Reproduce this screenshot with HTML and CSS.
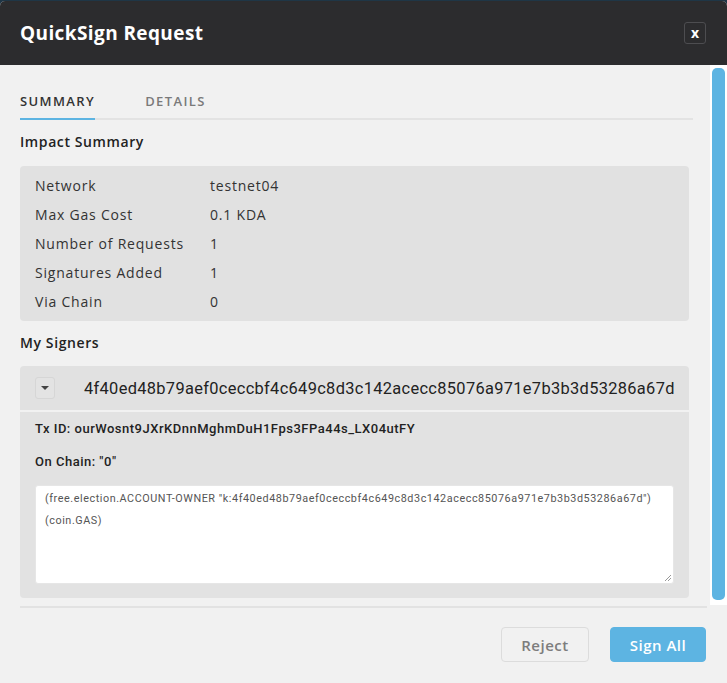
FILE: index.html
```html
<!DOCTYPE html>
<html>
<head>
<meta charset="utf-8">
<link rel="stylesheet" href="styles.css">
</head>
<body>
<div class="modal">
  <div class="header">
    <div class="title">QuickSign Request</div>
    <button class="close">x</button>
  </div>
  <div class="main">
    <div class="content">
      <div class="tabs">
        <div class="tab active">SUMMARY</div>
        <div class="tab">DETAILS</div>
      </div>
      <div class="heading first">Impact Summary</div>
      <div class="summary">
        <div class="row"><span class="label">Network</span><span class="value">testnet04</span></div>
        <div class="row"><span class="label">Max Gas Cost</span><span class="value">0.1 KDA</span></div>
        <div class="row"><span class="label">Number of Requests</span><span class="value">1</span></div>
        <div class="row"><span class="label">Signatures Added</span><span class="value">1</span></div>
        <div class="row"><span class="label">Via Chain</span><span class="value">0</span></div>
      </div>
      <div class="heading">My Signers</div>
      <div class="signer-head">
        <button class="toggle"><span class="caret"></span></button>
        <span class="key">4f40ed48b79aef0ceccbf4c649c8d3c142acecc85076a971e7b3b3d53286a67d</span>
      </div>
      <div class="signer-body">
        <div class="meta">Tx ID: ourWosnt9JXrKDnnMghmDuH1Fps3FPa44s_LX04utFY</div>
        <div class="meta chain">On Chain: "0"</div>
        <div class="caps">
          <div class="cap">(free.election.ACCOUNT-OWNER "k:4f40ed48b79aef0ceccbf4c649c8d3c142acecc85076a971e7b3b3d53286a67d")</div>
          <div class="cap">(coin.GAS)</div>
          <svg class="grip" width="8" height="8" viewBox="0 0 8 8"><path d="M7 1 L1 7 M7 4 L4 7" stroke="#999" stroke-width="1"/></svg>
        </div>
      </div>
    </div>
    <div class="scrollbar"><div class="thumb"></div></div>
  </div>
  <div class="footer">
    <div class="actions">
      <button class="btn reject">Reject</button>
      <button class="btn sign">Sign All</button>
    </div>
  </div>
</div>
</body>
</html>
```

FILE: styles.css
```css
* { box-sizing: border-box; }
html, body { margin: 0; padding: 0; }
body {
  background: #1f3646;
  width: 727px;
  height: 683px;
  overflow: hidden;
  font-family: "Open Sans", "Noto Sans", sans-serif;
}
.modal {
  margin-top: 1px;
  height: 682px;
  background: #f1f1f1;
  border-radius: 5px 5px 0 0;
  display: flex;
  flex-direction: column;
  overflow: hidden;
}
.header {
  height: 64px;
  flex: none;
  background: #2c2c2e;
  display: flex;
  align-items: center;
  justify-content: space-between;
  padding: 0 21px 0 20px;
}
.title {
  color: #fff;
  font-size: 19px;
  font-weight: 700;
  letter-spacing: 0.4px;
}
.close {
  width: 22px;
  height: 22px;
  padding: 0;
  border: 1px solid #4d4d50;
  border-radius: 3px;
  background: #2c2c2e;
  color: #fff;
  font-family: "Open Sans", sans-serif;
  font-weight: 700;
  font-size: 14px;
  line-height: 18px;
}
.main {
  height: 541px;
  flex: none;
  display: flex;
  overflow: hidden;
}
.content {
  flex: 1;
  min-width: 0;
  padding: 20px 21px 0 20px;
}
.tabs {
  display: flex;
  gap: 50px;
  border-bottom: 2px solid #e3e3e3;
  margin-right: -4px;
}
.tab {
  font-size: 13px;
  font-weight: 600;
  letter-spacing: 1.4px;
  color: #7a7a7a;
  line-height: 17px;
  padding: 8px 0 8px;
  margin-bottom: -2px;
  border-bottom: 2px solid transparent;
}
.tab.active {
  color: #333;
  border-bottom-color: #5db4e2;
}
.heading {
  font-size: 14px;
  font-weight: 600;
  color: #222;
  line-height: 20px;
  letter-spacing: 0.6px;
  margin: 12px 0 13px;
}
.heading.first { margin-top: 12px; margin-bottom: 14px; }
.summary {
  background: #e1e1e1;
  border-radius: 4px;
  padding: 5px 15px;
}
.row {
  display: flex;
  height: 29px;
  align-items: center;
  font-size: 14px;
  font-weight: 500;
  color: #333;
  letter-spacing: 0.8px;
}
.label { width: 175px; }
.signer-head {
  height: 44px;
  background: #e1e1e1;
  border-radius: 4px 4px 0 0;
  display: flex;
  align-items: center;
  padding-left: 15px;
}
.toggle {
  width: 20px;
  height: 22px;
  padding: 0;
  border: 1px solid #d6d6d6;
  border-radius: 3px;
  background: #e3e3e3;
  display: flex;
  align-items: center;
  justify-content: center;
}
.caret {
  width: 0;
  height: 0;
  border-left: 4px solid transparent;
  border-right: 4px solid transparent;
  border-top: 4px solid #444;
}
.key {
  margin-left: 29px;
  font-family: Roboto, "Liberation Sans", sans-serif;
  font-size: 16.4px;
  letter-spacing: 0.33px;
  color: #222;
  white-space: nowrap;
}
.signer-body {
  margin-top: 2px;
  background: #e2e2e2;
  border-radius: 0 0 4px 4px;
  padding: 8px 15px 14px;
}
.meta {
  font-family: Roboto, "Liberation Sans", sans-serif;
  font-weight: 500;
  font-size: 13px;
  letter-spacing: 0.5px;
  color: #222;
  line-height: 17px;
}
.meta.chain { margin-top: 16px; }
.caps {
  position: relative;
  margin-top: 15px;
  height: 99px;
  background: #fff;
  border-radius: 3px;
  border: 1px solid #e6e6e6;
  padding: 2px 9px;
}
.cap {
  font-family: Roboto, "Liberation Sans", sans-serif;
  font-size: 10.8px;
  letter-spacing: 0.56px;
  color: #555;
  line-height: 22px;
  white-space: nowrap;
}
.grip {
  position: absolute;
  right: 1px;
  bottom: 1px;
}
.scrollbar {
  width: 17px;
  flex: none;
  background: #fff;
  padding: 3px 2px 5px 2px;
  height: 540px;
}
.thumb {
  height: 100%;
  background: #5db4e2;
  border-radius: 5px;
}
.footer {
  flex: 1;
  padding: 0 20px;
}
.actions {
  border-top: 2px solid #e2e2e2;
  display: flex;
  justify-content: flex-end;
  gap: 21px;
  padding-top: 19px;
}
.btn {
  height: 35px;
  border-radius: 4px;
  font-family: "Open Sans", sans-serif;
  font-size: 15px;
  font-weight: 600;
  letter-spacing: 0.5px;
  padding: 0;
}
.reject {
  width: 88px;
  background: #f1f1f1;
  border: 1px solid #dcdcdc;
  color: #7d7d7d;
}
.sign {
  width: 96px;
  background: #5db4e2;
  border: 1px solid #5db4e2;
  color: #fff;
  margin-right: 1px;
}
```
